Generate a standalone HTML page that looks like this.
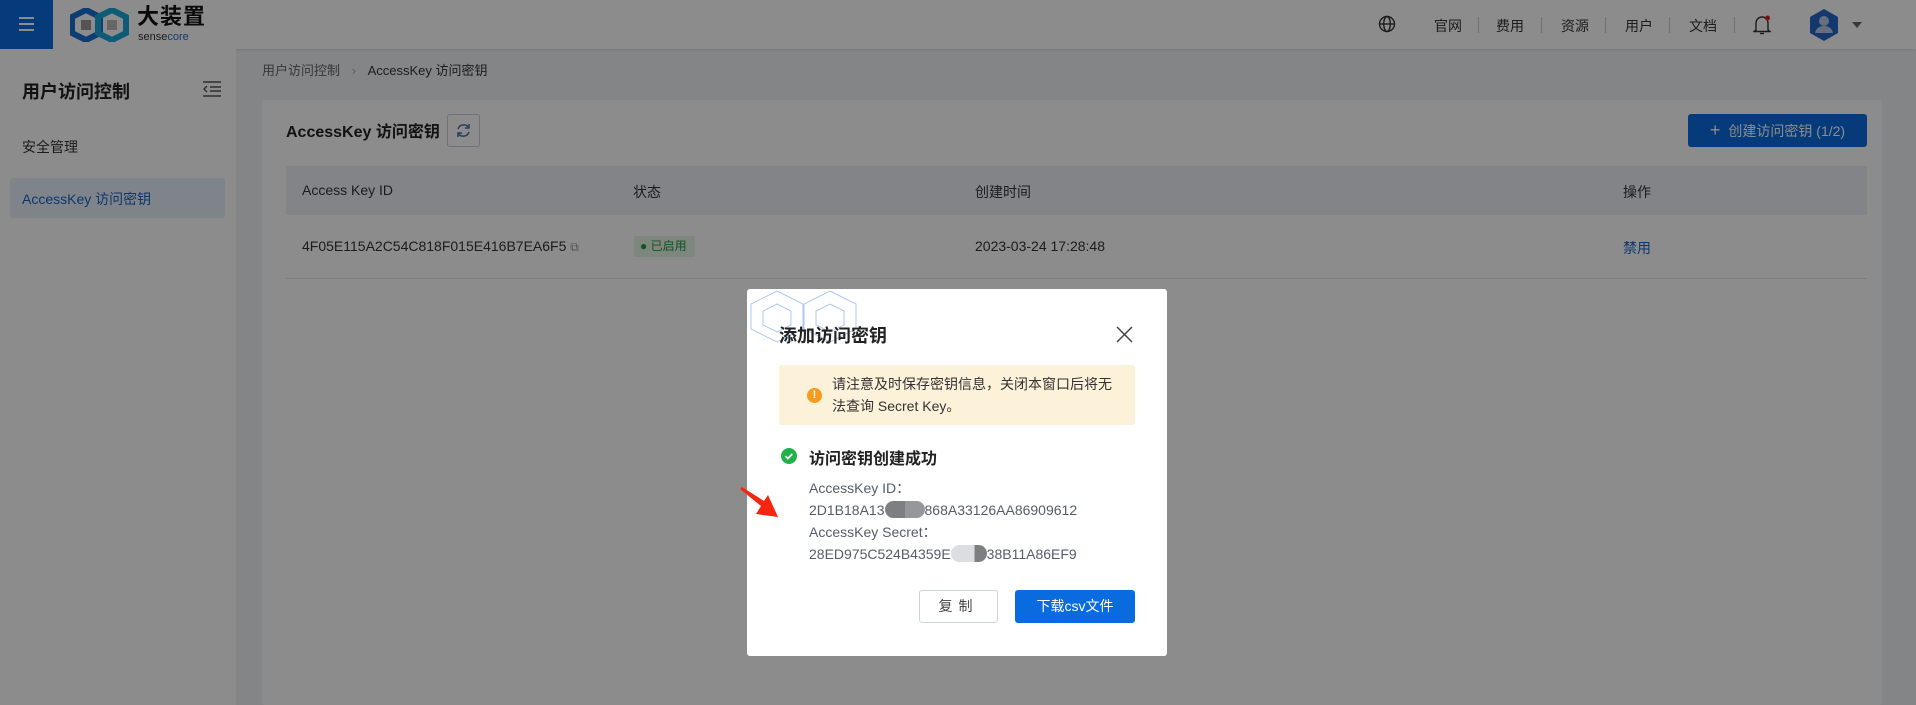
<!DOCTYPE html>
<html style="overflow:hidden;width:1916px;height:705px"><head><meta charset="utf-8"><style>
*{margin:0;padding:0;box-sizing:border-box}
body{width:1916px;height:705px;overflow:hidden;position:relative;font-family:"Liberation Sans","Noto Sans CJK SC",sans-serif;background:#f0f2f5;color:#222}
.abs{position:absolute}
.hdr{left:0;top:0;width:1916px;height:49px;background:#fff;box-shadow:0 1px 3px rgba(0,0,0,.1)}
.menu{left:0;top:0;width:53px;height:49px;background:#0a6be0}
.nav{top:16px;font-size:14px;color:#333}
.sep{top:17px;width:1px;height:16px;background:#ccc}
.side{left:0;top:49px;width:236px;height:656px;background:#fff}
.card{left:262px;top:100px;width:1620px;height:605px;background:#fff;border-radius:3px}
.overlay{left:0;top:0;width:1916px;height:705px;background:rgba(0,0,0,.45)}
.modal{left:747px;top:289px;width:420px;height:367px;background:#fff;border-radius:3px;overflow:hidden}
.t14{font-size:14px}
</style></head><body>
<div class="abs hdr"></div>
<div class="abs menu"><div class="abs" style="left:19px;top:17px;width:15px;height:2px;background:#fff"></div><div class="abs" style="left:19px;top:23px;width:15px;height:2px;background:#fff"></div><div class="abs" style="left:19px;top:29px;width:15px;height:2px;background:#fff"></div></div>
<svg class="abs" style="left:70px;top:8px" width="64" height="34" viewBox="0 0 64 34"><polygon points="16,2 30,9 30,25 16,32 2,25 2,9" fill="none" stroke="#1b6fd0" stroke-width="6"/><polygon points="42,2 56,9 56,25 42,32 28,25 28,9" fill="none" stroke="#19a7d8" stroke-width="6"/><rect x="11" y="12" width="10" height="10" fill="#999"/><rect x="37" y="12" width="10" height="10" fill="#bbb"/></svg>
<div class="abs" style="left:137px;top:4px;font-size:22px;font-weight:bold;color:#111;letter-spacing:1px;line-height:26px">大装置</div>
<div class="abs" style="left:138px;top:31px;font-size:11px;color:#333;line-height:12px">sense<span style="color:#1b6fd0">core</span></div>
<svg class="abs" style="left:1378px;top:15px" width="18" height="18" viewBox="0 0 18 18" fill="none" stroke="#333" stroke-width="1.4"><circle cx="9" cy="9" r="7.5"/><ellipse cx="9" cy="9" rx="3.3" ry="7.5"/><path d="M1.5 9h15"/></svg>
<div class="abs nav" style="left:1434px">官网</div><div class="abs sep" style="left:1478px"></div>
<div class="abs nav" style="left:1496px">费用</div><div class="abs sep" style="left:1541px"></div>
<div class="abs nav" style="left:1561px">资源</div><div class="abs sep" style="left:1605px"></div>
<div class="abs nav" style="left:1625px">用户</div><div class="abs sep" style="left:1669px"></div>
<div class="abs nav" style="left:1689px">文档</div><div class="abs sep" style="left:1734px"></div>
<svg class="abs" style="left:1753px;top:14px" width="18" height="22" viewBox="0 0 18 22" fill="none" stroke="#333" stroke-width="1.4"><path d="M3 16V9a6 6 0 0 1 12 0v7l2 1.5H1z"/><path d="M7 19.5h4"/><circle cx="14.5" cy="4" r="2.5" fill="#e0201e" stroke="none"/></svg>
<svg class="abs" style="left:1810px;top:9px" width="28" height="32" viewBox="0 0 28 32"><polygon points="14,0 28,8 28,24 14,32 0,24 0,8" fill="#2566c7"/><circle cx="14" cy="12" r="5" fill="#b8cbe8"/><path d="M5 24c1-5 5-7 9-7s8 2 9 7z" fill="#b8cbe8"/></svg>
<div class="abs" style="left:1852px;top:22px;width:0;height:0;border-left:5px solid transparent;border-right:5px solid transparent;border-top:6px solid #666"></div>

<div class="abs side"></div>
<div class="abs" style="left:22px;top:78px;font-size:18px;font-weight:bold;color:#222">用户访问控制</div>
<svg class="abs" style="left:202px;top:81px" width="20" height="16" viewBox="0 0 20 16" stroke="#555" stroke-width="1.4"><path d="M1 1h18M8 6h11M8 10h11M1 15h18"/><path d="M5 5l-3 3 3 3" fill="none"/></svg>
<div class="abs t14" style="left:22px;top:137px;color:#333">安全管理</div>
<div class="abs" style="left:10px;top:178px;width:215px;height:40px;background:#e8f0fb;border-radius:3px"></div>
<div class="abs t14" style="left:22px;top:189px;color:#1a62c9">AccessKey 访问密钥</div>

<div class="abs" style="left:262px;top:60px;font-size:13px;color:#666">用户访问控制 <span style="color:#aaa;margin:0 8px">›</span> <span style="color:#333">AccessKey 访问密钥</span></div>
<div class="abs card"></div>
<div class="abs" style="left:286px;top:118px;font-size:16px;font-weight:bold;color:#222">AccessKey 访问密钥</div>
<div class="abs" style="left:447px;top:114px;width:33px;height:33px;border:1px solid #ccd;border-radius:3px"></div>
<svg class="abs" style="left:455px;top:122px" width="17" height="17" viewBox="0 0 17 17" fill="none" stroke="#4a6fa8" stroke-width="1.5"><path d="M3 7a6 6 0 0 1 11-1M14 10a6 6 0 0 1-11 1"/><path d="M14 2v4h-4M3 15v-4h4"/></svg>
<div class="abs" style="left:1688px;top:114px;width:179px;height:33px;background:#0a6be0;border-radius:3px;color:#fff;font-size:14px;line-height:33px;text-align:center"><span style="font-size:18px;font-weight:300;margin-right:8px">+</span>创建访问密钥 (1/2)</div>
<div class="abs" style="left:286px;top:166px;width:1581px;height:49px;background:#eef1f6"></div>
<div class="abs t14" style="left:302px;top:182px;color:#333">Access Key ID</div>
<div class="abs t14" style="left:633px;top:182px;color:#333">状态</div>
<div class="abs t14" style="left:975px;top:182px;color:#333">创建时间</div>
<div class="abs t14" style="left:1623px;top:182px;color:#333">操作</div>
<div class="abs t14" style="left:302px;top:238px;color:#333">4F05E115A2C54C818F015E416B7EA6F5 <span style="color:#999;font-size:12px">⧉</span></div>
<div class="abs" style="left:634px;top:236px;width:61px;height:21px;background:#e3f6e6;border-radius:2px;font-size:12px;color:#229944;line-height:21px;padding-left:6px">● 已启用</div>
<div class="abs t14" style="left:975px;top:238px;color:#333">2023-03-24 17:28:48</div>
<div class="abs t14" style="left:1623px;top:238px;color:#1a62c9">禁用</div>
<div class="abs" style="left:286px;top:278px;width:1581px;height:1px;background:#e3e6eb"></div>

<div class="abs overlay"></div>

<div class="abs modal">
<svg class="abs" style="left:0;top:0" width="120" height="70" viewBox="0 0 120 70" fill="none" stroke="#a9c8f5" stroke-width="1"><polygon points="30,2 56,15 56,40 30,53 4,40 4,15"/><polygon points="83,2 109,15 109,40 83,53 57,40 57,15"/><polygon points="30,15 44,22 44,36 30,43 16,36 16,22"/><polygon points="83,15 97,22 97,36 83,43 69,36 69,22"/></svg>
<div class="abs" style="left:32px;top:33px;font-size:18px;font-weight:bold;color:#222">添加访问密钥</div>
<svg class="abs" style="left:369px;top:37px" width="17" height="17" viewBox="0 0 17 17" stroke="#444" stroke-width="1.5"><path d="M1 1l15 15M16 1L1 16"/></svg>
<div class="abs" style="left:32px;top:76px;width:356px;height:60px;background:#fcf1d9;border-radius:3px"></div>
<div class="abs" style="left:60px;top:99px;width:15px;height:15px;border-radius:50%;background:#f79a1d;color:#fff;font-size:11px;font-weight:bold;text-align:center;line-height:15px">!</div>
<div class="abs" style="left:85px;top:84px;font-size:14px;color:#333;line-height:22px;width:285px">请注意及时保存密钥信息，关闭本窗口后将无法查询 Secret Key。</div>
<div class="abs" style="left:34px;top:159px;width:16px;height:16px;border-radius:50%;background:#21b14b"></div>
<svg class="abs" style="left:34px;top:159px" width="16" height="16" viewBox="0 0 16 16" fill="none" stroke="#fff" stroke-width="1.7"><path d="M4.5 8.2l2.3 2.3 4.5-4.5"/></svg>
<div class="abs" style="left:62px;top:156px;font-size:16px;font-weight:bold;color:#222">访问密钥创建成功</div>
<div class="abs" style="left:62px;top:188px;font-size:14px;color:#555d6b;line-height:22px">AccessKey ID：<br>2D1B18A13<span style="display:inline-block;width:40px;height:17px;vertical-align:-3px;border-radius:9px;background:linear-gradient(90deg,#7e7f83 50%,#96979b 50%)"></span>868A33126AA86909612<br>AccessKey Secret：<br>28ED975C524B4359E<span style="display:inline-block;width:36px;height:17px;vertical-align:-3px;border-radius:9px;background:linear-gradient(90deg,#dcdde0 65%,#7e7f83 65%)"></span>38B11A86EF9</div>
<div class="abs" style="left:172px;top:301px;width:79px;height:33px;border:1px solid #ccd3dd;border-radius:3px;font-size:14px;color:#444;text-align:center;line-height:31px;letter-spacing:6px">复制</div>
<div class="abs" style="left:268px;top:301px;width:120px;height:33px;background:#0a6be0;border-radius:3px;font-size:14px;color:#fff;text-align:center;line-height:33px">下载csv文件</div>
</div>
<svg class="abs" style="left:738px;top:486px" width="44" height="34" viewBox="0 0 44 34"><path d="M2 3L4 1 26 15 30 9 40 31 18 28 23 20z" fill="#f5260f"/></svg>
</body></html>
